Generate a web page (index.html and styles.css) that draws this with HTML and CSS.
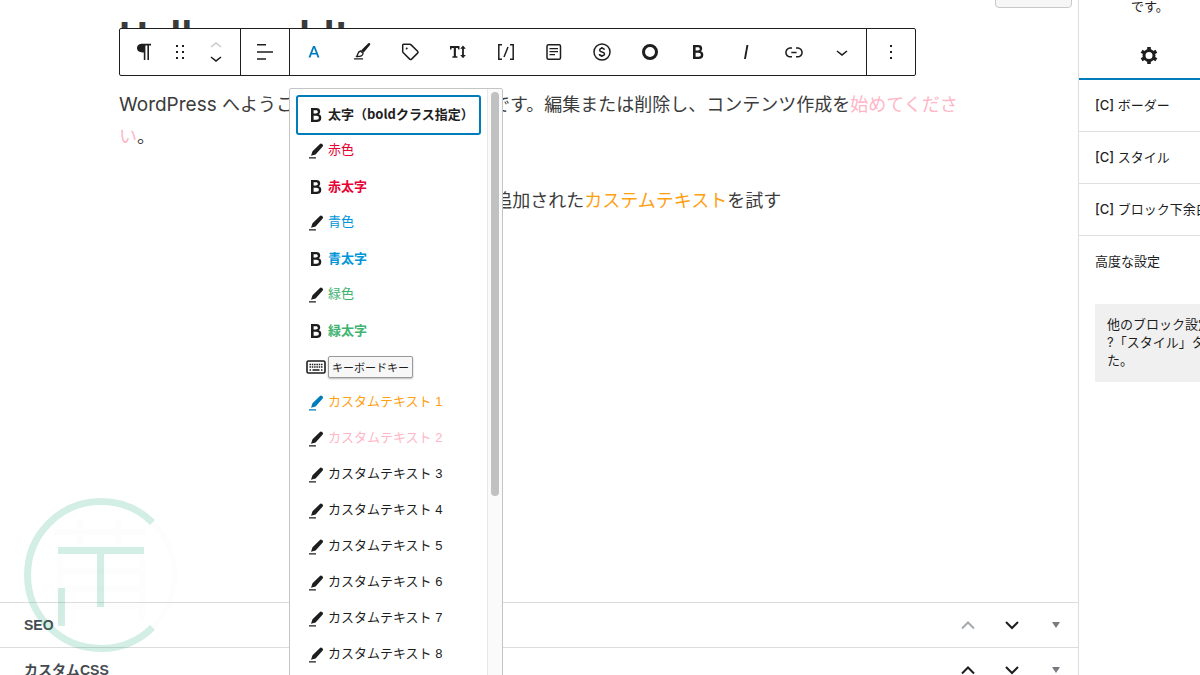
FILE: index.html
```html
<!DOCTYPE html>
<html lang="ja">
<head>
<meta charset="utf-8">
<meta name="viewport" content="width=device-width, initial-scale=1">
<title>投稿の編集</title>
<link rel="stylesheet" href="styles.css">
</head>
<body>
<svg class="sprite" aria-hidden="true">
  <symbol id="bold" viewBox="0 0 24 24"><path d="M14.7 11.3c1-.6 1.5-1.6 1.5-3 0-2.3-1.3-3.4-4-3.4H7v14h5.8c1.4 0 2.5-.3 3.3-1 .8-.7 1.2-1.7 1.2-2.9.1-1.9-.8-3.1-2.6-3.7zm-5.1-4h2.3c.6 0 1.1.1 1.4.4.3.3.5.7.5 1.2s-.2 1-.5 1.2c-.3.3-.8.4-1.4.4H9.6V7.3zm4.6 9c-.4.3-1 .4-1.7.4H9.6v-3.9h2.9c.7 0 1.3.2 1.7.5.4.3.6.8.6 1.5s-.2 1.2-.6 1.5z"/></symbol>
  <symbol id="pen" viewBox="0 0 24 24"><path d="M5 19.500v-1.300h7v1.300zM7 16.800l1.500-4.500 7.700-7.500q.9-.7 1.900.2l.5.500q.9 1 .1 1.900l-7.100 8.200z"/></symbol>
  <symbol id="chevron" viewBox="0 0 24 24"><path d="M17.500 11.600L12 16l-5.500-4.400.9-1.200L12 14l4.500-3.600 1 1.200z"/></symbol>
  <symbol id="up" viewBox="0 0 24 24"><path d="M6 15.500l6-6 6 6" fill="none" stroke="currentColor" stroke-width="2"/></symbol>
  <symbol id="down" viewBox="0 0 24 24"><path d="M6 9l6 6 6-6" fill="none" stroke="currentColor" stroke-width="2"/></symbol>
  <symbol id="toggle" viewBox="0 0 24 24"><path d="M8 9h8l-4 6z"/></symbol>
</svg>

<div class="app">
  <main class="main">
    <div class="screen-options"><button class="screen-button" type="button" aria-label="表示オプション"></button></div>

    <article class="canvas">
      <h1 class="title">Hello world!</h1>

      <div class="toolbar" role="toolbar" aria-label="ブロックツール">
        <div class="group">
          <button class="tool" type="button" aria-label="段落"><svg class="icon" viewBox="0 0 24 24"><path d="M10.500 3.800H19v1.600h-2V20h-1.600V5.400h-2V20h-1.600v-7.600h-1.300C7.500 12.400 5 11 5 8.100s2.500-4.300 5.500-4.300z"/></svg></button>
          <button class="tool tool-narrow" type="button" aria-label="ドラッグ"><svg class="icon" viewBox="0 0 24 24"><path d="M8 7h2V5H8v2zm0 6h2v-2H8v2zm0 6h2v-2H8v2zm6-14v2h2V5h-2zm0 8h2v-2h-2v2zm0 6h2v-2h-2v2z"/></svg></button>
          <div class="movers">
            <button class="mover" type="button" aria-label="上に移動" disabled><svg class="icon flip" viewBox="0 0 24 24"><use href="#chevron"/></svg></button>
            <button class="mover" type="button" aria-label="下に移動"><svg class="icon"><use href="#chevron"/></svg></button>
          </div>
        </div>
        <div class="group">
          <button class="tool" type="button" aria-label="配置"><svg class="icon" viewBox="0 0 24 24"><path d="M4 4h9v1.500H4zM4 11.200h16v1.500H4zM4 18.300h9v1.500H4z"/></svg></button>
        </div>
        <div class="group">
          <button class="tool active" type="button" aria-label="文字" aria-expanded="true"><svg class="icon" viewBox="0 0 24 24"><path d="M11 6h2l4.500 11.500h-2l-1.100-3H9.600l-1.100 3h-2zm1 1.900l-1.800 5h3.600z"/></svg></button>
          <button class="tool" type="button" aria-label="マーカー"><svg class="icon" viewBox="0 0 24 24"><path d="M4 18.300h9v1.300H4zM11 10.500l7.300-7.200q.8-.7 1.600 0 .8.900.1 1.700l-6.500 7.800z"/><path d="M10.500 11l2.500 2.300c0 2.300-2.200 3.300-6.300 3.200 1-1.400.9-4.700 3.800-5.500z" fill="none" stroke="currentColor" stroke-width="1.300"/></svg></button>
          <button class="tool" type="button" aria-label="バッジ"><svg class="icon" viewBox="0 0 24 24"><path d="M5.500 4.300h6.200q.8 0 1.400.6l6.500 6.300q.9 1 0 1.900l-6 6q-1 .9-1.900 0l-6.400-6.300q-.6-.6-.6-1.400V5.100q0-.8.8-.8z" fill="none" stroke="currentColor" stroke-width="1.500"/><circle cx="8.700" cy="8.500" r="1"/></svg></button>
          <button class="tool" type="button" aria-label="文字サイズ"><svg class="icon" viewBox="0 0 24 24"><path d="M4 6h9.500v3.500h-1.300L11.800 8h-1.900v8.300h1.500v1.500h-5v-1.500h1.400V8H5.700l-.4 1.500H4zM17 5.500l2.800 3.200h-1.900v6.300h1.900L17 18.200 14.200 15h1.900V8.700h-1.900z"/></svg></button>
          <button class="tool" type="button" aria-label="ショートコード"><svg class="icon" viewBox="0 0 24 24"><path d="M8 4.800H4.800v14.400H8M16 4.800h3.200v14.400H16M10 17l4-10" fill="none" stroke="currentColor" stroke-width="1.500"/></svg></button>
          <button class="tool" type="button" aria-label="テンプレート"><svg class="icon" viewBox="0 0 24 24"><rect x="5" y="4.700" width="13.500" height="14.500" rx="1.500" fill="none" stroke="currentColor" stroke-width="1.500"/><path d="M7.500 8h8.500v1.300H7.500zM7.500 11h8.500v1.300H7.500zM7.500 14h5.500v1.300H7.500z"/></svg></button>
          <button class="tool" type="button" aria-label="アフィリエイト"><svg class="icon" viewBox="0 0 24 24"><g fill="none" stroke="currentColor" stroke-width="1.500"><circle cx="12" cy="12" r="8"/><path d="M14.500 9.800Q14 8.300 12 8.300t-2.400 1.800Q9.600 11.500 12 12t2.500 2q-.1 1.700-2.500 1.700t-2.700-1.700M12 7v1.500M12 15.500V17"/></g></svg></button>
          <button class="tool" type="button" aria-label="ランキング"><svg class="icon" viewBox="0 0 24 24"><circle cx="12" cy="12" r="6.500" fill="none" stroke="currentColor" stroke-width="3"/></svg></button>
          <button class="tool" type="button" aria-label="太字"><svg class="icon"><use href="#bold"/></svg></button>
          <button class="tool" type="button" aria-label="イタリック"><svg class="icon" viewBox="0 0 24 24"><path d="M12.500 5L10 19h1.900l2.500-14z"/></svg></button>
          <button class="tool" type="button" aria-label="リンク"><svg class="icon" viewBox="0 0 24 24"><path d="M15.600 7.200H14v1.500h1.600c2 0 3.700 1.700 3.700 3.700s-1.700 3.700-3.700 3.700H14v1.500h1.600c2.800 0 5.200-2.300 5.200-5.200 0-2.900-2.300-5.200-5.200-5.200zM4.700 12.400c0-2 1.700-3.700 3.700-3.700H10V7.200H8.400c-2.900 0-5.200 2.300-5.200 5.200 0 2.900 2.300 5.200 5.200 5.200H10v-1.500H8.400c-2 0-3.700-1.700-3.700-3.700zm4.600.9h5.300v-1.500H9.300v1.500z"/></svg></button>
          <button class="tool" type="button" aria-label="さらに表示"><svg class="icon"><use href="#chevron"/></svg></button>
        </div>
        <div class="group">
          <button class="tool" type="button" aria-label="オプション"><svg class="icon" viewBox="0 0 24 24"><path d="M13 19h-2v-2h2v2zm0-6h-2v-2h2v2zm0-6h-2V5h2v2z"/></svg></button>
        </div>
      </div>

      <p class="text"><span class="latin">WordPress </span>へようこそ。こちらは最初の投稿です。編集または削除し、コンテンツ作成を<span class="pink">始めてください</span>。</p>
      <p class="text centered">SWELLのメニューへと追加された<span class="orange">カステムテキスト</span>を試す</p>

      <div class="popover">
        <div class="menu" role="menu">
          <button class="item strong focused" type="button" role="menuitem"><svg class="icon-small"><use href="#bold"/></svg><span class="label">太字（boldクラス指定）</span></button>
          <button class="item" type="button" role="menuitem"><svg class="icon-small"><use href="#pen"/></svg><span class="label red">赤色</span></button>
          <button class="item strong" type="button" role="menuitem"><svg class="icon-small"><use href="#bold"/></svg><span class="label red">赤太字</span></button>
          <button class="item" type="button" role="menuitem"><svg class="icon-small"><use href="#pen"/></svg><span class="label blue">青色</span></button>
          <button class="item strong" type="button" role="menuitem"><svg class="icon-small"><use href="#bold"/></svg><span class="label blue">青太字</span></button>
          <button class="item" type="button" role="menuitem"><svg class="icon-small"><use href="#pen"/></svg><span class="label green">緑色</span></button>
          <button class="item strong" type="button" role="menuitem"><svg class="icon-small"><use href="#bold"/></svg><span class="label green">緑太字</span></button>
          <button class="item" type="button" role="menuitem"><svg class="icon-small" viewBox="-2 -2 24 24"><rect x="1" y="4" width="18" height="12" rx="1.500" fill="none" stroke="currentColor" stroke-width="1.600"/><path d="M3.500 7.500h13M3.500 10h13" fill="none" stroke="currentColor" stroke-width="1.500" stroke-dasharray="1.500 .8"/><path d="M3.500 12.300H5v1.500H3.500zM6.500 12.300h7v1.500h-7zM15 12.300h1.500v1.500H15z"/></svg><kbd class="key">キーボードキー</kbd></button>
          <button class="item" type="button" role="menuitem"><svg class="icon-small selected"><use href="#pen"/></svg><span class="label orange">カスタムテキスト 1</span></button>
          <button class="item" type="button" role="menuitem"><svg class="icon-small"><use href="#pen"/></svg><span class="label pink">カスタムテキスト 2</span></button>
          <button class="item" type="button" role="menuitem"><svg class="icon-small"><use href="#pen"/></svg><span class="label">カスタムテキスト 3</span></button>
          <button class="item" type="button" role="menuitem"><svg class="icon-small"><use href="#pen"/></svg><span class="label">カスタムテキスト 4</span></button>
          <button class="item" type="button" role="menuitem"><svg class="icon-small"><use href="#pen"/></svg><span class="label">カスタムテキスト 5</span></button>
          <button class="item" type="button" role="menuitem"><svg class="icon-small"><use href="#pen"/></svg><span class="label">カスタムテキスト 6</span></button>
          <button class="item" type="button" role="menuitem"><svg class="icon-small"><use href="#pen"/></svg><span class="label">カスタムテキスト 7</span></button>
          <button class="item" type="button" role="menuitem"><svg class="icon-small"><use href="#pen"/></svg><span class="label">カスタムテキスト 8</span></button>
        </div>
        <div class="track"><div class="thumb"></div></div>
      </div>
    </article>

    <section class="metaboxes">
      <div class="metabox">
        <h2 class="metabox-title">SEO</h2>
        <button class="order" type="button" aria-label="上に移動" disabled><svg class="icon-meta"><use href="#up"/></svg></button>
        <button class="order" type="button" aria-label="下に移動"><svg class="icon-meta"><use href="#down"/></svg></button>
        <button class="order order-toggle" type="button" aria-label="パネルを切り替え"><svg class="icon-meta"><use href="#toggle"/></svg></button>
      </div>
      <div class="metabox">
        <h2 class="metabox-title">カスタムCSS</h2>
        <button class="order" type="button" aria-label="上に移動"><svg class="icon-meta"><use href="#up"/></svg></button>
        <button class="order" type="button" aria-label="下に移動"><svg class="icon-meta"><use href="#down"/></svg></button>
        <button class="order order-toggle" type="button" aria-label="パネルを切り替え"><svg class="icon-meta"><use href="#toggle"/></svg></button>
      </div>
    </section>

    <svg class="watermark" viewBox="0 0 160 160" aria-hidden="true">
      <g fill="none" stroke="#000" stroke-opacity=".008" stroke-width="6"><path d="M132.500 27.500A73.500 73.500 0 0 1 132.500 132.500M34 37h92M60 25v24M98 25v24M40 60v66M122 60v66M40 76h82M40 94h82M40 111h82"/></g>
      <g fill="none" stroke="#22a876" stroke-opacity=".2" stroke-width="7"><path d="M132.500 27.500A73.500 73.500 0 1 0 132.500 132.500"/><path d="M38 55.500h86M80.500 59v53M41.500 93v38"/></g>
    </svg>
  </main>

  <aside class="sidebar">
    <div class="sidebar-inner">
      <p class="description">です。</p>
      <div class="tabs">
        <button class="tab" type="button" aria-label="設定"><svg class="icon" viewBox="0 0 24 24"><g fill="none" stroke="currentColor"><circle cx="12" cy="12.500" r="5" stroke-width="3"/><path d="M12 7V4M12 18v3M7.200 9.700L4.600 8.200M16.800 15.300l2.600 1.500M7.200 15.300l-2.600 1.500M16.800 9.700l2.600-1.500" stroke-width="3.600"/></g></svg></button>
        <button class="tab" type="button" aria-label="スタイル"></button>
      </div>
      <button class="panel" type="button"><span class="tag">[C]</span> ボーダー</button>
      <button class="panel" type="button"><span class="tag">[C]</span> スタイル</button>
      <button class="panel" type="button"><span class="tag">[C]</span> ブロック下余白</button>
      <button class="panel" type="button">高度な設定</button>
      <p class="notice">他のブロック設定をお探しですか<br>?「スタイル」タブに移動しまし<br>た。</p>
    </div>
  </aside>
</div>
</body>
</html>
```

FILE: styles.css
```css
* {
  box-sizing: border-box;
}

body {
  margin: 0;
  background: #fff;
  color: #1e1e1e;
  font: 13px/18px Inter, "Noto Sans CJK JP", sans-serif;
}

button {
  margin: 0;
  padding: 0;
  border: 0;
  background: none;
  color: inherit;
  font: inherit;
}

svg {
  fill: currentColor;
}

.sprite {
  position: absolute;
  width: 0;
  height: 0;
}

.app {
  display: flex;
  height: 100vh;
  overflow: hidden;
}

.main {
  position: relative;
  display: flex;
  flex: 1;
  flex-direction: column;
  min-width: 0;
}

.screen-options {
  display: flex;
  justify-content: flex-end;
  align-items: flex-end;
  height: 8px;
  padding-right: 6px;
  overflow: hidden;
}

.screen-button {
  flex: none;
  width: 77px;
  height: 28px;
  border: 1px solid #c8c8c8;
  border-radius: 4px;
  background: #f6f6f6;
}

.canvas {
  position: relative;
  flex: 1;
  min-height: 0;
  padding: 8px 107px 0 119px;
  color: #3b3b3b;
}

.title {
  margin: 0 0 33px;
  font: bold 40px/40px "Liberation Sans", sans-serif;
}

.text {
  margin: 0 0 32px;
  font-size: 18px;
  line-height: 32px;
}

.latin {
  font-size: 19px;
  line-height: 1;
}

.centered {
  text-align: center;
}

.pink {
  color: #ffb6c6;
}

.orange {
  color: #ffa012;
}

.red {
  color: #e60033;
}

.blue {
  color: #0095d9;
}

.green {
  color: #3eb370;
}

.toolbar {
  position: absolute;
  top: 20px;
  left: 119px;
  display: flex;
  border: 1px solid #1e1e1e;
  border-radius: 2px;
  background: #fff;
  color: #1e1e1e;
}

.group {
  display: flex;
}

.group + .group {
  border-left: 1px solid #1e1e1e;
}

.tool {
  display: flex;
  align-items: center;
  justify-content: center;
  width: 48px;
  height: 46px;
}

.tool-narrow {
  width: 24px;
}

.active,
.selected {
  color: #007cba;
}

.movers {
  display: flex;
  flex-direction: column;
  justify-content: center;
  width: 48px;
}

.mover {
  display: flex;
  align-items: center;
  justify-content: center;
  height: 12px;
}

.mover:disabled {
  color: #ccc;
}

.icon {
  flex: none;
  width: 24px;
  height: 24px;
}

.flip {
  transform: rotate(180deg);
}

.popover {
  position: absolute;
  top: 80px;
  bottom: -80px;
  left: 289px;
  z-index: 2;
  display: flex;
  width: 214px;
  overflow: hidden;
  border: 1px solid #c4c4c4;
  border-radius: 2px;
  background: #fff;
  color: #1e1e1e;
}

.menu {
  flex: 1;
  padding: 8px 6px;
}

.item {
  display: flex;
  align-items: center;
  width: 100%;
  height: 36px;
  padding-left: 8px;
  font-family: "Liberation Sans", "Noto Sans CJK JP", sans-serif;
  text-align: left;
  white-space: nowrap;
}

.label {
  padding-bottom: 3px;
}

.strong {
  font-family: "Noto Sans CJK JP", sans-serif;
  font-weight: 700;
}

.focused {
  height: 40px;
  margin: -2px 0;
  border-radius: 3px;
  box-shadow: inset 0 0 0 2px #007cba;
}

.icon-small {
  flex: none;
  width: 24px;
  height: 24px;
}

.key {
  padding: 1px 3px;
  border: 1px solid #999;
  border-radius: 2px;
  background: #f7f7f7;
  box-shadow: 0 1px 2px #bbb;
  font: 11px/18px "Noto Sans CJK JP", sans-serif;
}

.track {
  width: 15px;
  padding: 3px;
  border-left: 1px solid #e8e8e8;
  background: #fafafa;
}

.thumb {
  width: 8px;
  height: 404px;
  border-radius: 4px;
  background: #c1c1c1;
}

.metaboxes {
  flex: none;
  height: 73px;
  overflow: hidden;
}

.metabox {
  display: flex;
  align-items: center;
  gap: 20px;
  height: 45px;
  padding: 0 10px 0 24px;
  border-top: 1px solid #dcdcdc;
}

.metabox-title {
  flex: 1;
  margin: 0;
  color: #464b50;
  font: bold 14px/20px "Liberation Sans", "Noto Sans CJK JP", sans-serif;
}

.order {
  display: flex;
  justify-content: center;
  width: 24px;
}

.order:disabled {
  color: #a7aaad;
}

.order-toggle {
  color: #787c82;
}

.icon-meta {
  width: 24px;
  height: 24px;
}

.watermark {
  position: absolute;
  bottom: 20px;
  left: 20px;
  z-index: 1;
  width: 160px;
  height: 160px;
  pointer-events: none;
}

.sidebar {
  width: 122px;
  overflow: hidden;
  border-left: 1px solid #ddd;
}

.sidebar-inner {
  width: 280px;
}

.description {
  height: 32px;
  margin: 0;
  padding-left: 52px;
  line-height: 12px;
}

.tabs {
  display: flex;
  border-bottom: 2px solid #007cba;
}

.tab {
  display: flex;
  align-items: center;
  justify-content: center;
  width: 50%;
  height: 46px;
}

.panel {
  display: block;
  width: 100%;
  height: 52px;
  padding: 0 16px 2px;
  border-bottom: 1px solid #e0e0e0;
  text-align: left;
}

.tag {
  font-weight: 500;
}

.panel:last-of-type {
  border-bottom: 0;
}

.notice {
  margin: 16px;
  padding: 11px 12px 13px;
  background: #f0f0f0;
  text-spacing-trim: space-all;
}
```
